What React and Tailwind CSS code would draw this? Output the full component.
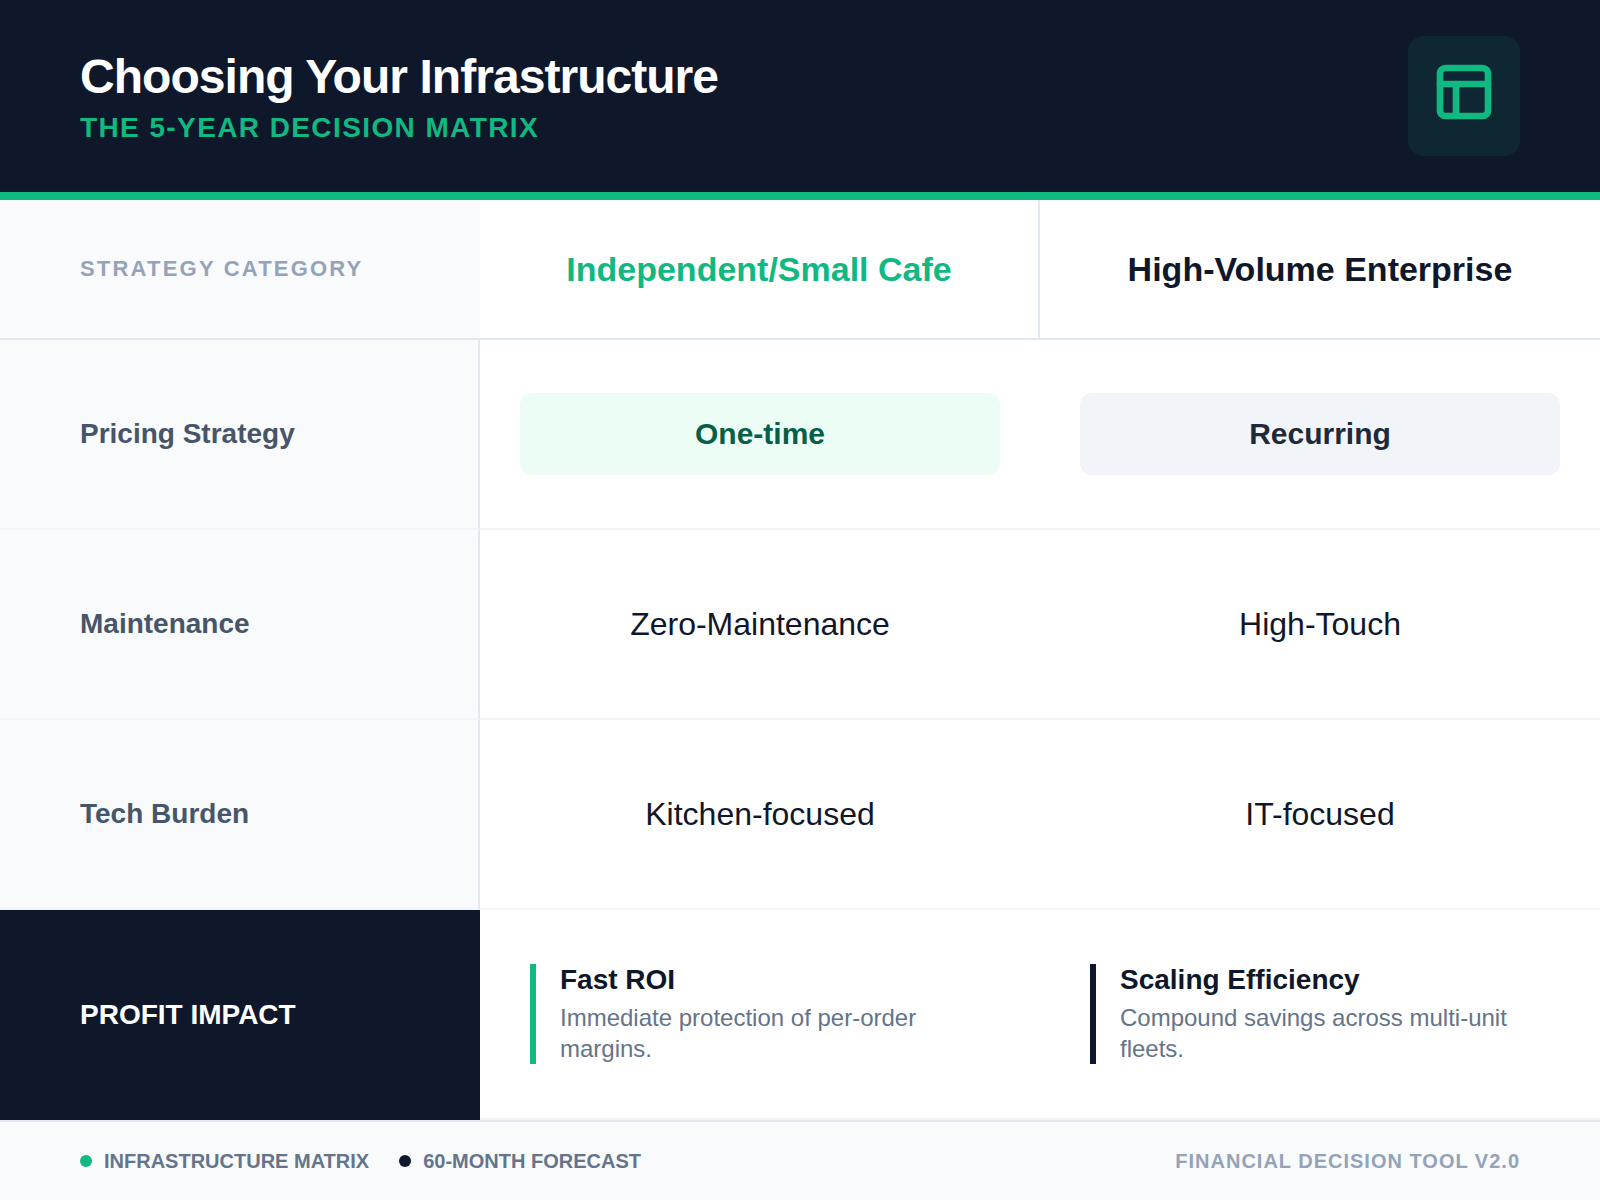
import React from 'react';
import { PanelsTopLeft } from 'lucide-react';

const rows = [
  { label: 'Maintenance', left: 'Zero-Maintenance', right: 'High-Touch' },
  { label: 'Tech Burden', left: 'Kitchen-focused', right: 'IT-focused' },
];

const Impact = ({ bar, title, text }) => (
  <div className={`border-l-[6px] ${bar} pl-6`}>
    <div className="text-[28px] leading-[32px] font-bold text-[#0f172a]">{title}</div>
    <div className="mt-[6px] text-[24px] leading-[31px] text-[#64748b]">{text}</div>
  </div>
);

export default function App() {
  return (
    <div className="w-[1600px] h-[1200px] flex flex-col bg-white font-['Liberation_Sans',Arial,sans-serif] overflow-hidden">
      <header className="h-[200px] shrink-0 flex items-center justify-between bg-[#0f172a] border-b-8 border-[#10b981] px-20">
        <div className="pt-[6px]">
          <h1 className="text-[48px] leading-[48px] font-bold tracking-[-0.96px] text-white">Choosing Your Infrastructure</h1>
          <p className="mt-[9px] text-[28px] leading-[36px] font-bold tracking-[1.4px] text-[#10b981]">THE 5-YEAR DECISION MATRIX</p>
        </div>
        <div className="pt-6 pb-8 px-6 rounded-2xl bg-[#10b981]/10">
          <PanelsTopLeft strokeWidth={2.5} className="w-16 h-16 text-[#10b981]" />
        </div>
      </header>

      <main className="flex-1 grid grid-cols-[480px_560px_560px] grid-rows-[140px_190px_190px_190px_210px]">
        <div className="flex items-center bg-[#f8fafc] border-b-2 border-[#e2e8f0] px-20 pb-[2px] text-[22px] font-bold tracking-[2.2px] text-[#94a3b8]">STRATEGY CATEGORY</div>
        <div className="flex items-center justify-center border-b-2 border-r-2 border-[#e2e8f0] text-[34px] font-bold text-[#10b981]">Independent/Small Cafe</div>
        <div className="flex items-center justify-center border-b-2 border-[#e2e8f0] text-[34px] font-bold text-[#0f172a]">High-Volume Enterprise</div>

        <div className="flex items-center bg-[#f8fafc] border-b-2 border-r-2 border-b-[#f1f5f9] border-r-[#e2e8f0] px-20 text-[28px] font-bold text-[#475569]">Pricing Strategy</div>
        <div className="flex items-center border-b-2 border-[#f1f5f9] px-10">
          <div className="w-full h-[82px] flex items-center justify-center rounded-xl bg-[#ecfdf5] pb-[2px] text-[30px] font-bold text-[#065f46]">One-time</div>
        </div>
        <div className="flex items-center border-b-2 border-[#f1f5f9] px-10">
          <div className="w-full h-[82px] flex items-center justify-center rounded-xl bg-[#f1f5f9] pb-[2px] text-[30px] font-bold text-[#1e293b]">Recurring</div>
        </div>

        {rows.map((row) => (
          <React.Fragment key={row.label}>
            <div className="flex items-center bg-[#f8fafc] border-b-2 border-r-2 border-b-[#f1f5f9] border-r-[#e2e8f0] px-20 text-[28px] font-bold text-[#475569]">{row.label}</div>
            <div className="flex items-center justify-center border-b-2 border-[#f1f5f9] text-[32px] text-[#0f172a]">{row.left}</div>
            <div className="flex items-center justify-center border-b-2 border-[#f1f5f9] text-[32px] text-[#0f172a]">{row.right}</div>
          </React.Fragment>
        ))}

        <div className="flex items-center bg-[#0f172a] px-20 text-[28px] font-bold text-white">PROFIT IMPACT</div>
        <div className="flex items-center border-b-2 border-[#f1f5f9] px-10 pl-[50px]">
          <Impact bar="border-[#10b981]" title="Fast ROI" text="Immediate protection of per-order margins." />
        </div>
        <div className="flex items-center border-b-2 border-[#f1f5f9] px-10 pl-[50px]">
          <Impact bar="border-[#0f172a]" title="Scaling Efficiency" text="Compound savings across multi-unit fleets." />
        </div>
      </main>

      <footer className="h-[80px] shrink-0 flex items-center justify-between bg-[#f8fafc] border-t-2 border-[#e2e8f0] px-20 text-[20px] font-bold text-[#64748b]">
        <div className="flex items-center gap-[30px]">
          <div className="flex items-center gap-3">
            <span className="w-3 h-3 rounded-full bg-[#10b981]" />
            <span>INFRASTRUCTURE MATRIX</span>
          </div>
          <div className="flex items-center gap-3">
            <span className="w-3 h-3 rounded-full bg-[#0f172a]" />
            <span>60-MONTH FORECAST</span>
          </div>
        </div>
        <div className="tracking-[1px] text-[#94a3b8]">FINANCIAL DECISION TOOL V2.0</div>
      </footer>
    </div>
  );
}
